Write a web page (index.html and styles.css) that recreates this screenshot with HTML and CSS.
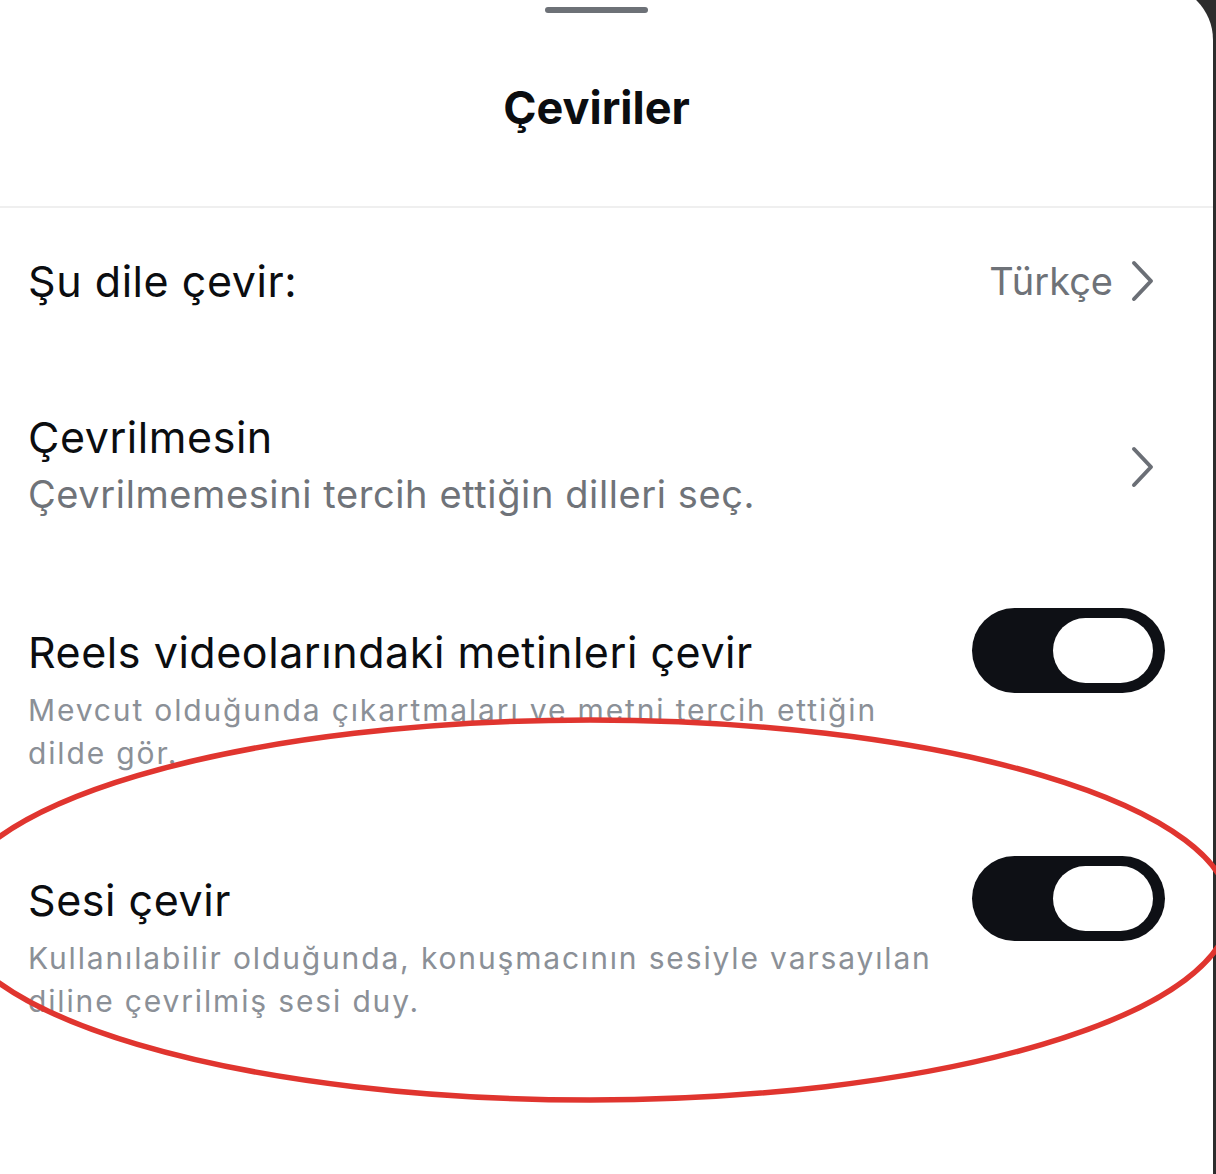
FILE: index.html
```
<!DOCTYPE html>
<html lang="tr">
<head>
    <meta charset="UTF-8">
    <meta name="viewport" content="width=device-width, initial-scale=1.0">
    <title>Çeviriler</title>
    <link rel="stylesheet" href="styles.css">
</head>
<body>
    <div class="sheet">
        <div class="sheet-header">
            <div class="grabber"></div>
            <h1 class="sheet-title">Çeviriler</h1>
        </div>

        <div class="settings">
            <div class="row row-link first">
                <div class="row-text">
                    <div class="row-title">Şu dile çevir:</div>
                </div>
                <span class="row-value">Türkçe</span>
                <svg class="chevron" viewBox="0 0 26 44" width="26" height="44">
                    <path d="M4 4 L21 22 L4 40" />
                </svg>
            </div>

            <div class="row row-link">
                <div class="row-text">
                    <div class="row-title">Çevrilmesin</div>
                    <div class="row-sub">Çevrilmemesini tercih ettiğin dilleri seç.</div>
                </div>
                <svg class="chevron" viewBox="0 0 26 44" width="26" height="44">
                    <path d="M4 4 L21 22 L4 40" />
                </svg>
            </div>

            <div class="row row-toggle">
                <div class="row-text">
                    <div class="row-title">Reels videolarındaki metinleri çevir</div>
                    <div class="row-hint">Mevcut olduğunda çıkartmaları ve metni tercih ettiğin dilde gör.</div>
                </div>
                <div class="switch on"><span class="knob"></span></div>
            </div>

            <div class="row row-toggle">
                <div class="row-text">
                    <div class="row-title">Sesi çevir</div>
                    <div class="row-hint">Kullanılabilir olduğunda, konuşmacının sesiyle varsayılan diline çevrilmiş sesi duy.</div>
                </div>
                <div class="switch on"><span class="knob"></span></div>
            </div>
        </div>
    </div>

    <!-- red hand-drawn circle over the last option -->
    <svg class="mark" viewBox="0 0 1216 1174" width="1216" height="1174">
        <ellipse cx="590" cy="910" rx="640" ry="190" />
    </svg>
</body>
</html>
```

FILE: styles.css
```
html, body {
    margin: 0;
    padding: 0;
    height: 100%;
    overflow: hidden;
}
body {
    background-color: #2d2d2d;
    font-family: Inter, "Liberation Sans", Arial, sans-serif;
    color: #0b0d10;
}
.sheet {
    background-color: #fff;
    margin: -16px 3px 0 0;
    padding-top: 16px;
    height: 1190px;
    box-sizing: border-box;
    border-top-right-radius: 56px;
}
.sheet-header {
    padding: 7px 20px 71px 0;
    border-bottom: 2px solid #efefef;
    text-align: center;
}
.grabber {
    width: 103px;
    height: 6px;
    border-radius: 3px;
    background-color: #6d7177;
    margin: 0 auto 68px;
}
.sheet-title {
    margin: 0;
    font-size: 45px;
    line-height: 54px;
    font-weight: 700;
}
.row {
    display: flex;
    align-items: center;
    padding: 50px 48px 50px 28px;
}
.row.first {
    padding-top: 45px;
}
.row-text {
    flex: 1;
    min-width: 0;
}
.row-title {
    font-size: 43px;
    line-height: 56px;
    letter-spacing: 0.55px;
}
.row-sub {
    font-size: 38px;
    line-height: 59px;
    color: #6f7379;
    letter-spacing: 0.6px;
}
.row-value {
    font-size: 38px;
    line-height: 56px;
    color: #6e7278;
    margin-left: 16px;
}
.chevron {
    margin: 0 9px 0 17px;
    fill: none;
    stroke: #6b6f76;
    stroke-width: 4;
    stroke-linecap: round;
    stroke-linejoin: round;
}
.row-toggle {
    align-items: flex-start;
    gap: 32px;
}
.row-toggle + .row-toggle {
    padding-top: 47px;
}
.row-hint {
    margin-top: 9px;
    font-size: 30px;
    line-height: 43px;
    color: #8b9097;
    letter-spacing: 1.85px;
}
.switch {
    flex: none;
    width: 193px;
    height: 85px;
    margin-top: -16px;
    border-radius: 43px;
    background-color: #0e1015;
    display: flex;
    align-items: center;
    justify-content: flex-end;
    padding-right: 12px;
    box-sizing: border-box;
}
.knob {
    width: 100px;
    height: 65px;
    border-radius: 33px;
    background-color: #fff;
}
.mark {
    position: absolute;
    left: 0;
    top: 0;
    pointer-events: none;
}
.mark ellipse {
    fill: none;
    stroke: #e0352f;
    stroke-width: 5.5;
}
```
